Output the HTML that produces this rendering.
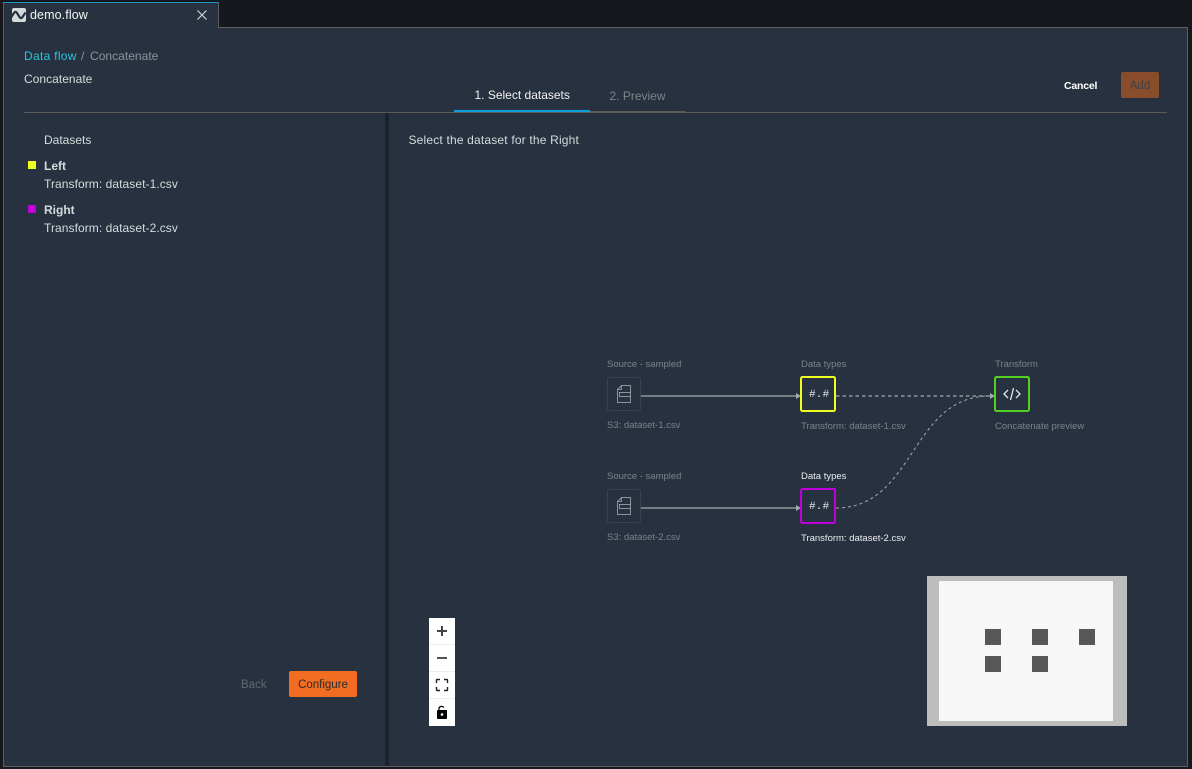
<!DOCTYPE html>
<html><head><meta charset="utf-8"><style>
*{box-sizing:border-box;margin:0;padding:0}
html,body{width:1192px;height:769px;overflow:hidden;background:#16181d}
body{position:relative;font-family:"Liberation Sans",sans-serif;font-size:12px;color:#d5dbdb}
.a{position:absolute;white-space:nowrap;line-height:14px}
.s{letter-spacing:.07px}
.n{font-size:9.5px;letter-spacing:0;line-height:12px;color:#7b8288}
.w{color:#eaeded}
.b{position:absolute}
</style></head><body>
<div class="b" style="left:3px;top:27px;width:1185px;height:740px;background:#283140;border:1px solid #5b5f63"></div>
<div class="b" style="left:3px;top:2px;width:216px;height:26px;background:#283140;border-top:1px solid #1b93c4;border-left:1px solid #5b5f63;border-right:1px solid #5b5f63"></div>
<svg class="b" style="left:12px;top:8px" width="14" height="14" viewBox="0 0 14 14"><rect width="14" height="14" rx="2" fill="#d5dbdb"/><path d="M-1 9.500 2 5C3 3.500 4 3.500 5 5L7.500 9C8.500 10.500 9.500 10.500 10.500 9L13.500 4.500" fill="none" stroke="#283140" stroke-width="2.200"/></svg>
<div class="a" style="left:30px;top:8px;color:#f2f3f3;font-size:12.5px;letter-spacing:.1px">demo.flow</div>
<svg class="b" style="left:197px;top:10px" width="10" height="10"><path d="M.5.5 9.5 9.5M9.5.5.5 9.5" stroke="#d5dbdb" stroke-width="1.100"/></svg>

<div class="a" style="left:24px;top:49px;color:#2bc4d8;letter-spacing:.3px">Data flow</div>
<div class="a" style="left:81px;top:49px;color:#8d9399">/</div>
<div class="a" style="left:90px;top:49px;color:#8d9399;letter-spacing:.03px">Concatenate</div>
<div class="a" style="left:24px;top:72px;letter-spacing:.03px">Concatenate</div>

<div class="a" style="left:474.500px;top:88px;color:#f2f3f3;font-size:12px">1. Select datasets</div>
<div class="a" style="left:609.500px;top:89px;color:#7d848a;font-size:12px">2. Preview</div>
<div class="b" style="left:24px;top:112px;width:1143px;height:1px;background:#5b5a58"></div>
<div class="b" style="left:590px;top:111px;width:96px;height:2px;background:#5b5a58"></div>
<div class="b" style="left:454px;top:110px;width:136px;height:2px;background:#0a9fd8"></div>

<div class="a" style="left:1064px;top:78.500px;color:#fff;font-weight:bold;letter-spacing:-.2px;font-size:10.500px">Cancel</div>
<div class="b" style="left:1121px;top:72px;width:38px;height:26px;background:#8a4d2c;border-radius:2px;color:#3f3f45;text-align:center;line-height:28px;font-size:11.500px">Add</div>

<div class="b" style="left:385px;top:113px;width:4px;height:653px;background:#1c222c"></div>

<div class="a" style="left:44px;top:133px;letter-spacing:0">Datasets</div>
<div class="b" style="left:28px;top:161px;width:8px;height:8px;background:#f0ff1e"></div>
<div class="a" style="left:44px;top:159px;font-weight:bold">Left</div>
<div class="a s" style="left:44px;top:177px">Transform: dataset-1.csv</div>
<div class="b" style="left:28px;top:205px;width:8px;height:8px;background:#c000dc"></div>
<div class="a" style="left:44px;top:203px;font-weight:bold">Right</div>
<div class="a s" style="left:44px;top:221px">Transform: dataset-2.csv</div>

<div class="a" style="left:241px;top:678px;color:#5f6670;font-size:11.500px">Back</div>
<div class="b" style="left:289px;top:671px;width:68px;height:26px;background:#f26d21;border-radius:2px;color:#2b2b2f;text-align:center;line-height:28px;font-size:11.500px">Configure</div>

<div class="a" style="left:408.500px;top:133px;letter-spacing:.18px">Select the dataset for the Right</div>

<div class="a n" style="left:607px;top:359px">Source - sampled</div>
<div class="a n" style="left:801px;top:359px">Data types</div>
<div class="a n" style="left:995px;top:359px">Transform</div>
<div class="a n" style="left:607px;top:420px">S3: dataset-1.csv</div>
<div class="a n" style="left:801px;top:421px">Transform: dataset-1.csv</div>
<div class="a n" style="left:995px;top:421px">Concatenate preview</div>
<div class="a n" style="left:607px;top:471px">Source - sampled</div>
<div class="a n w" style="left:801px;top:471px">Data types</div>
<div class="a n" style="left:607px;top:532px">S3: dataset-2.csv</div>
<div class="a n w" style="left:801px;top:533px">Transform: dataset-2.csv</div>

<svg class="b" style="left:0;top:0" width="1192" height="769">
<g fill="none" stroke="#a6abaf">
<path d="M641 396H797M641 508H797" stroke-width="1.200"/>
<path d="M836 396H990" stroke-dasharray="3.500 3" stroke-width="1.200"/>
<path d="M836 508C915 508 910 396 990 396" stroke-dasharray="3 3" stroke-width="1"/>
</g>
<g fill="#a6abaf"><path d="M796 393 801 396 796 399ZM796 505 801 508 796 511ZM990 393 995 396 990 399Z"/></g>
<g fill="none" stroke="#3a424e"><rect x="607.500" y="377.500" width="33" height="33" rx="2"/><rect x="607.500" y="489.500" width="33" height="33" rx="2"/></g>
<g fill="none" stroke="#8d9399" stroke-width="1">
<path d="M621.500 385.500H630.500V402.500H617.500V389.500ZM617.500 389.500H621.500V385.500M619.500 392.500H630.500V396.500H619.500Z"/>
<path d="M621.500 497.500H630.500V514.500H617.500V501.500ZM617.500 501.500H621.500V497.500M619.500 504.500H630.500V508.500H619.500Z"/>
</g>
<g fill="#283140" stroke-width="2">
<rect x="801" y="377" width="34" height="34" rx="1.500" stroke="#f0ff1e"/>
<rect x="801" y="489" width="34" height="34" rx="1.500" stroke="#c000dc"/>
<rect x="995" y="377" width="34" height="34" rx="1.500" stroke="#52d020"/>
</g>
<g fill="none" stroke="#e3e6e6" stroke-width="1.300"><path d="M1008 390 1004 394 1008 398M1016 390 1020 394 1016 398M1013.500 388 1010.500 400"/></g>
</svg>
<div class="a" style="left:809px;top:388px;font-family:'Liberation Mono',monospace;font-size:11px;letter-spacing:.2px;color:#e3e6e6">#.#</div>
<div class="a" style="left:809px;top:500px;font-family:'Liberation Mono',monospace;font-size:11px;letter-spacing:.2px;color:#e3e6e6">#.#</div>

<div class="b" style="left:429px;top:618px;width:26px;height:108px;background:#fff"></div>
<div class="b" style="left:429px;top:644px;width:26px;height:1px;background:#eee"></div>
<div class="b" style="left:429px;top:671px;width:26px;height:1px;background:#eee"></div>
<div class="b" style="left:429px;top:698px;width:26px;height:1px;background:#eee"></div>
<svg class="b" style="left:429px;top:618px" width="26" height="108">
<path d="M8 13H18M13 8V18" stroke="#444" stroke-width="2"/>
<path d="M8 40H18" stroke="#555" stroke-width="2"/>
<path d="M7.500 65V62C7.500 61.500 8 61.500 8.500 61.500H11M15 61.500H18C18.500 61.500 18.500 62 18.500 62V65M18.500 69V72C18.500 72.500 18 72.500 18 72.500H15M11 72.500H8C7.500 72.500 7.500 72 7.500 72V69" fill="none" stroke="#222" stroke-width="1.400"/>
<rect x="8" y="92" width="10" height="9" rx="1" fill="#000"/><circle cx="13" cy="96.500" r="1.300" fill="#fff"/>
<path d="M10 92V90.500C10 88.500 13 87.500 15 89.500" fill="none" stroke="#000" stroke-width="1.200"/>
</svg>

<div class="b" style="left:927px;top:576px;width:200px;height:150px;background:#bdbdbd"></div>
<div class="b" style="left:939px;top:581px;width:174px;height:140px;background:#f7f7f7"></div>
<div class="b" style="left:985px;top:629px;width:16px;height:16px;background:#575757"></div>
<div class="b" style="left:1032px;top:629px;width:16px;height:16px;background:#575757"></div>
<div class="b" style="left:1079px;top:629px;width:16px;height:16px;background:#575757"></div>
<div class="b" style="left:985px;top:656px;width:16px;height:16px;background:#575757"></div>
<div class="b" style="left:1032px;top:656px;width:16px;height:16px;background:#575757"></div>
</body></html>
